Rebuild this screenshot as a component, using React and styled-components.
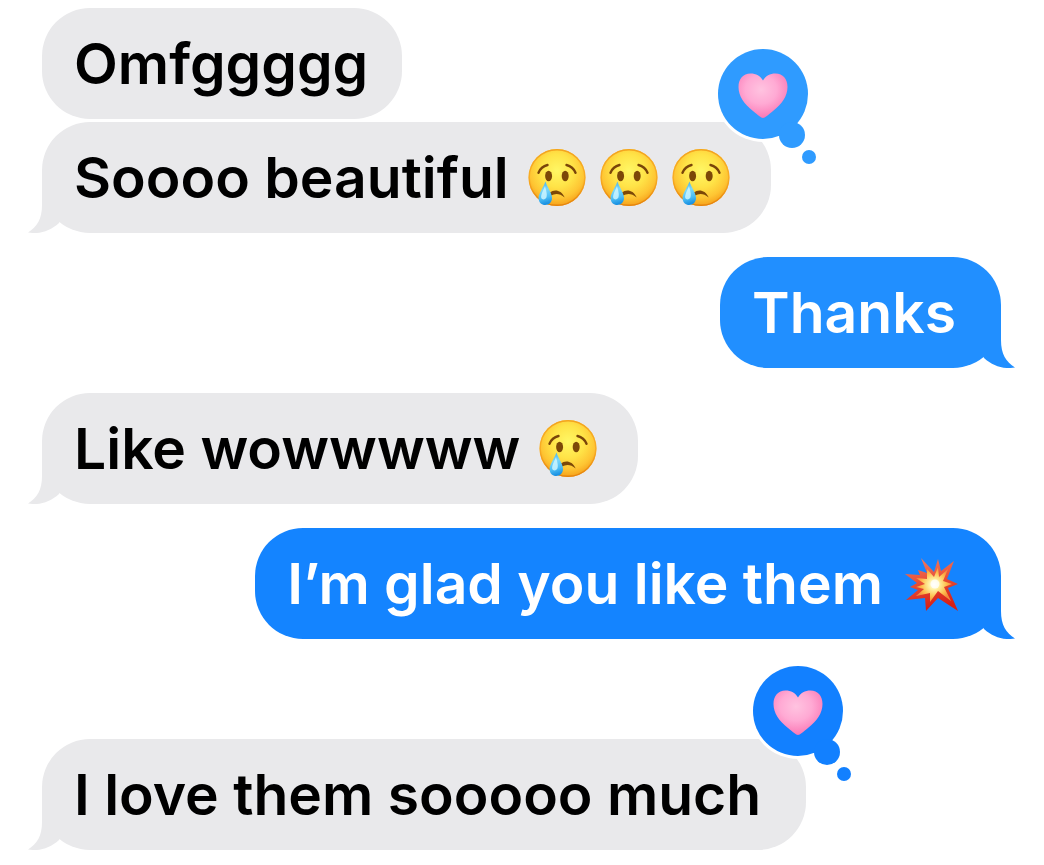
import React from 'react';
import styled, { createGlobalStyle } from 'styled-components';

const GlobalStyle = createGlobalStyle`
  body {
    margin: 0;
    background: #fff;
    font-family: Inter, 'Liberation Sans', sans-serif;
  }
`;

const Thread = styled.main`
  display: flex;
  flex-direction: column;
  padding: 8px 43px 14px 42px;
`;

const Bubble = styled.div`
  position: relative;
  display: flex;
  align-items: center;
  align-self: ${(p) => (p.$mine ? 'flex-end' : 'flex-start')};
  margin-top: ${(p) => p.$space}px;
  padding: 20px ${(p) => (p.$wide ? 45 : 34)}px 20px 32px;
  border-radius: 48px;
  background: ${(p) => p.$color};
  color: ${(p) => (p.$mine ? '#fff' : '#000')};
`;

const Text = styled.p`
  margin: 0;
  font-size: 57px;
  font-weight: 600;
  line-height: 71px;
  white-space: nowrap;
`;

const EmojiRow = styled.span`
  display: flex;
  margin-left: 12px;
`;

const Emoji = styled.svg`
  display: block;
  width: 58px;
  height: 58px;
  margin: 0 7px;
`;

const Tail = styled.svg`
  position: absolute;
  bottom: 0;
  ${(p) => (p.$mine ? 'right: -14px; transform: scaleX(-1);' : 'left: -14px;')}
  width: 34px;
  height: 56px;
  fill: ${(p) => p.$color};
`;

const Reaction = styled.svg`
  position: absolute;
  top: -76px;
  right: -49px;
  width: 108px;
  height: 120px;
`;

const CryingFace = () => (
  <Emoji viewBox="0 1 58 58" role="img" aria-label="crying face">
    <defs>
      <radialGradient id="face" cx="0.5" cy="0.38" r="0.64">
        <stop offset="0" stopColor="#fff765" />
        <stop offset="0.45" stopColor="#ffe347" />
        <stop offset="0.75" stopColor="#fec533" />
        <stop offset="1" stopColor="#f49a16" />
      </radialGradient>
      <linearGradient id="gloss" x1="0" y1="0" x2="0" y2="1">
        <stop offset="0" stopColor="#f3a31f" />
        <stop offset="0.5" stopColor="#f6a420" stopOpacity="0.7" />
        <stop offset="1" stopColor="#e5830c" />
      </linearGradient>
      <linearGradient id="drop" x1="0" y1="0" x2="0.15" y2="1">
        <stop offset="0" stopColor="#3fa9e8" />
        <stop offset="0.4" stopColor="#7bd8fb" />
        <stop offset="0.75" stopColor="#4cbdf4" />
        <stop offset="1" stopColor="#1c93e3" />
      </linearGradient>
    </defs>
    <circle cx="29" cy="29.5" r="28.5" fill="url(#face)" />
    <circle cx="29" cy="29.5" r="27.8" fill="none" stroke="url(#gloss)" strokeWidth="1.4" />
    <g fill="none" stroke="#7a4509" strokeWidth="2.4" strokeLinecap="round">
      <path d="M10.5 24.8 C12 21 15 18 19.5 17" />
      <path d="M38.5 17 C43 18 46 21 47.5 24.8" />
    </g>
    <g fill="#7c4808">
      <ellipse cx="20.6" cy="28" rx="3.5" ry="5.3" />
      <ellipse cx="37.2" cy="28" rx="3.5" ry="5.3" />
      <path d="M22 44.5 C26 41.2 33 41.5 36.7 49.4 C32 45.6 27.5 45 23 47.6 Z" />
    </g>
    <path
      d="M17.4 33.5 C15.5 39.5 10.6 45 10.6 50 C10.6 54.4 13.6 57 17.3 57 C21 57 24 54.2 24 50 C24 45 19.5 39.5 17.4 33.5 Z"
      fill="url(#drop)"
    />
    <path d="M17 38 C15 43 12.8 46.5 13.2 49.8 C14 52 17 52 18.4 49.5 C19.6 46.5 18 42 17 38 Z" fill="#d3f7ff" opacity="0.8" />
  </Emoji>
);

const Collision = () => (
  <Emoji viewBox="-2 1 58 58" role="img" aria-label="collision">
    <defs>
      <linearGradient id="flare" x1="0" y1="0" x2="0.2" y2="1">
        <stop offset="0" stopColor="#ee8068" />
        <stop offset="0.45" stopColor="#e9543b" />
        <stop offset="1" stopColor="#d61f16" />
      </linearGradient>
      <radialGradient id="core" cx="0.5" cy="0.5" r="0.5">
        <stop offset="0" stopColor="#fff" />
        <stop offset="0.3" stopColor="#fff0a0" />
        <stop offset="0.7" stopColor="#fdbd4c" />
        <stop offset="1" stopColor="#f38a3c" />
      </radialGradient>
    </defs>
    <path
      fill="url(#flare)"
      d="M17 4 L30 18 L34 5 L37 17 L50 7 L43 25 L54 30 L44 34 L54 57 L34 44 L22 57 L21 44 L2 46 L14 36 L6 33 L13 29 L1 20 L16 21 L14 16 L23 19 Z"
    />
    <path
      fill="url(#core)"
      d="M23 15 L30 23 L34 13 L35 23 L44 15 L39 27 L48 30 L40 33 L47 47 L34 37 L26 48 L26 39 L12 42 L20 35 L12 33 L21 30 L12 24 L23 25 Z"
    />
    <circle cx="31" cy="30" r="4.5" fill="#fff" opacity="0.75" />
  </Emoji>
);

const HeartReaction = ({ color }) => (
  <Reaction viewBox="0 0 108 120" role="img" aria-label="heart reaction">
    <defs>
      <radialGradient id="heart" cx="0.46" cy="0.36" r="0.64">
        <stop offset="0" stopColor="#ffc3e0" />
        <stop offset="0.5" stopColor="#ffaad4" />
        <stop offset="1" stopColor="#fb78b5" />
      </radialGradient>
    </defs>
    <circle cx="51" cy="48" r="48" fill="#fff" />
    <g fill={color}>
      <circle cx="51" cy="48" r="45" />
      <circle cx="80" cy="89" r="13" />
      <circle cx="97" cy="111" r="7" />
    </g>
    <path
      fill="url(#heart)"
      d="M51 72 C49 72 46 69 41 65 C32 58 26.500 50 26.500 41 C26.500 33 31 27.500 38.500 27.500 C44 27.500 48.500 30 51 34.500 C53.500 30 58 27.500 63.500 27.500 C71 27.500 75.500 33 75.500 41 C75.500 50 70 58 61 65 C56 69 53 72 51 72 Z"
    />
  </Reaction>
);

const emojis = { cry: CryingFace, boom: Collision };

const messages = [
  { id: 1, text: 'Omfggggg', color: '#e9e9eb', space: 0 },
  { id: 2, text: 'Soooo beautiful', emoji: ['cry', 'cry', 'cry'], color: '#e9e9eb', space: 3, tail: true, reaction: '#2f9bff' },
  { id: 3, text: 'Thanks', mine: true, color: '#218fff', space: 24, tail: true },
  { id: 4, text: 'Like wowwwww', emoji: ['cry'], color: '#e9e9eb', space: 25, tail: true },
  { id: 5, text: 'I’m glad you like them', emoji: ['boom'], mine: true, color: '#1484ff', space: 24, tail: true },
  { id: 6, text: 'I love them sooooo much', color: '#e9e9eb', space: 100, tail: true, reaction: '#1280ff' },
];

const Message = ({ message }) => {
  const { text, emoji, mine, color, space, tail, reaction } = message;
  return (
    <Bubble $mine={mine} $space={space} $color={color} $wide={tail && !emoji}>
      {tail && (
        <Tail $mine={mine} $color={color} viewBox="0 0 34 56" aria-hidden="true">
          <path d="M14 0 V28 C14 42 9 50 0 55.500 C12 57.500 22 54 31 46 L34 40 V0 Z" />
        </Tail>
      )}
      <Text>{text}</Text>
      {emoji && (
        <EmojiRow>
          {emoji.map((name, index) => {
            const Icon = emojis[name];
            return <Icon key={index} />;
          })}
        </EmojiRow>
      )}
      {reaction && <HeartReaction color={reaction} />}
    </Bubble>
  );
};

const App = () => (
  <>
    <GlobalStyle />
    <Thread>
      {messages.map((message) => (
        <Message key={message.id} message={message} />
      ))}
    </Thread>
  </>
);

export default App;
